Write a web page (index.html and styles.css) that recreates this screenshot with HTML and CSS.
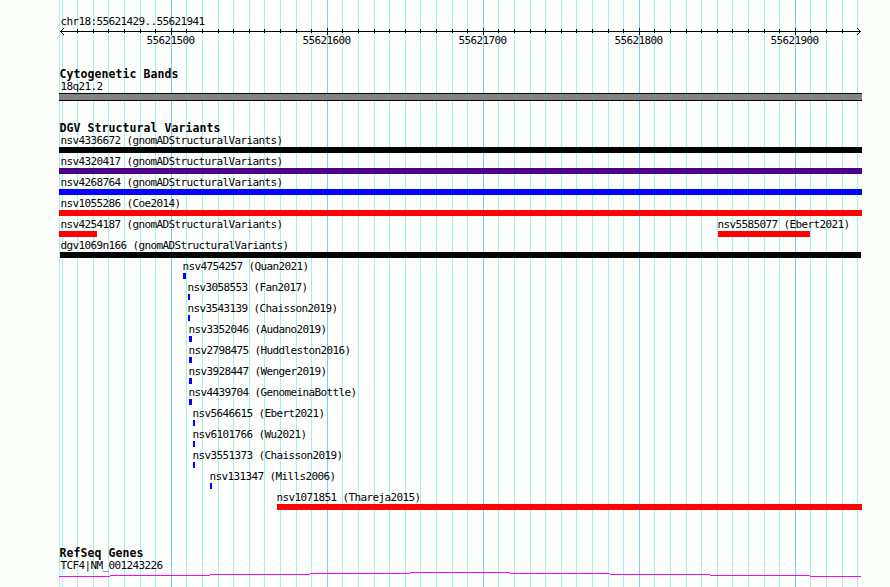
FILE: index.html
```html
<!DOCTYPE html>
<html lang="en">
<head>
<meta charset="utf-8">
<title>chr18:55621429..55621941</title>
<link rel="stylesheet" href="styles.css">
</head>
<body>
<main class="browser">
<svg class="grid" width="890" height="587" shape-rendering="crispEdges" aria-hidden="true"><path id="minor" class="minor"/><path id="major" class="major"/></svg>
<section class="region">
<div class="label">chr18:55621429..55621941</div>
<svg class="axis" width="804" height="7" shape-rendering="crispEdges"><path d="M1 3.5H802"/><path id="ticks"/><path d="M1 3h1v1h-1zM2 2h1v1h-1zM3 1h1v1h-1zM4 0h1v1h-1zM2 4h1v1h-1zM3 5h1v1h-1zM4 6h1v1h-1zM801 3h1v1h-1zM800 2h1v1h-1zM799 1h1v1h-1zM798 0h1v1h-1zM800 4h1v1h-1zM799 5h1v1h-1zM798 6h1v1h-1z" class="head"/></svg>
<div class="coordinates label"><span>55621500</span><span>55621600</span><span>55621700</span><span>55621800</span><span>55621900</span></div>
</section>
<section class="cytobands"><h2>Cytogenetic Bands</h2><div class="label">18q21.2</div><div class="band"></div></section>
<section class="variants"><h2>DGV Structural Variants</h2><div id="rows"></div></section>
<section class="genes"><h2>RefSeq Genes</h2><div class="label">TCF4|NM_001243226</div>
<svg class="gene" width="803" height="6" shape-rendering="crispEdges"><path d="M0 5.5H51M51 4.5H151M151 3.5H251M251 2.5H351M351 1.5H451M451 2.5H551M551 3.5H651M651 4.5H751M751 5.5H802"/></svg>
</section>
</main>
<script src="tracks.js"></script>
</body>
</html>
```
FILE: styles.css
```css
* { box-sizing: border-box; }
body { margin: 0; background: #fcfefc; color: #040204; overflow: hidden; }
.browser { position: relative; width: 890px; height: 587px; padding: 15px 0 0 59px; overflow: hidden; font-family: "DejaVu Sans Mono", monospace; }
.browser > section { position: relative; }
.grid { position: absolute; top: 0; left: 0; }
.grid path { fill: none; stroke-width: 1px; }
.grid .minor { stroke: #aceeec; }
.grid .major { stroke: #84caec; }
svg { display: block; }
.label { height: 13px; padding-left: 1px; font-size: 11px; line-height: 13px; letter-spacing: -0.622px; text-indent: 0.4px; white-space: pre; }
h2 { height: 13px; margin: 0; font-size: 11.5px; line-height: 13px; letter-spacing: 0.077px; text-indent: 0.4px; white-space: pre; }
.region { height: 53px; }
.axis path { stroke: #040204; fill: none; }
.axis .head { stroke: none; fill: #040204; }
.coordinates { display: flex; gap: 108px; padding-left: 87px; margin-top: -1px; }
.coordinates span { width: 48px; }
.cytobands { height: 54px; }
.cytobands .label { margin-top: -1px; }
.band { width: 803px; height: 8px; background: #848284; border: solid #040204; border-width: 1px 0; }
.variants { height: 425px; }
.variants h2 { height: 12px; }
.row { display: grid; grid-template-columns: 658px 145px; height: 21px; }
.feature { min-width: 0; }
.feature .label { padding: 0; }
.bar { height: 6px; }
.black { background: #040204; }
.purple { background: #4c0284; }
.blue { background: #0402fc; }
.red { background: #fc0204; }
.genes .label { margin-top: -1px; }
.gene { margin-top: -1px; }
.gene path { stroke: #fc02fc; fill: none; }
```
FILE: tracks.js
```js
const minor = [59];
const major = [];
let ticks = "";
for (let k = -7; k <= 44; k++) {
  const x = Math.floor((1712 + 156 * k) / 10);
  const isMajor = k % 10 === 0;
  (isMajor ? major : minor).push(x);
  if (k > -7 && k < 44) ticks += isMajor ? `M${x - 58.5} 0V7` : `M${x - 58.5} 1V5`;
}
const lines = xs => xs.map(x => `M${x + 0.5} 0V587`).join("");
document.getElementById("minor").setAttribute("d", lines(minor));
document.getElementById("major").setAttribute("d", lines(major));
document.getElementById("ticks").setAttribute("d", ticks);

// name, text offset, bar offset, bar width, colour
const rows = [
  [["nsv4336672 (gnomADStructuralVariants)", 1, 0, 803, "black"]],
  [["nsv4320417 (gnomADStructuralVariants)", 1, 0, 803, "purple"]],
  [["nsv4268764 (gnomADStructuralVariants)", 1, 0, 803, "blue"]],
  [["nsv1055286 (Coe2014)", 1, 0, 803, "red"]],
  [["nsv4254187 (gnomADStructuralVariants)", 1, 0, 38, "red"], ["nsv5585077 (Ebert2021)", 0, 1, 92, "red"]],
  [["dgv1069n166 (gnomADStructuralVariants)", 1, 1, 801, "black"]],
  [["nsv4754257 (Quan2021)", 123, 124, 3, "blue"]],
  [["nsv3058553 (Fan2017)", 128, 129, 2, "blue"]],
  [["nsv3543139 (Chaisson2019)", 128, 129, 2, "blue"]],
  [["nsv3352046 (Audano2019)", 129, 130, 3, "blue"]],
  [["nsv2798475 (Huddleston2016)", 129, 130, 3, "blue"]],
  [["nsv3928447 (Wenger2019)", 129, 130, 3, "blue"]],
  [["nsv4439704 (GenomeinaBottle)", 129, 130, 3, "blue"]],
  [["nsv5646615 (Ebert2021)", 133, 134, 2, "blue"]],
  [["nsv6101766 (Wu2021)", 133, 134, 2, "blue"]],
  [["nsv3551373 (Chaisson2019)", 133, 134, 2, "blue"]],
  [["nsv131347 (Mills2006)", 150, 151, 2, "blue"]],
  [["nsv1071851 (Thareja2015)", 217, 218, 585, "red"]]
];
document.getElementById("rows").innerHTML = rows.map(row => `<div class="row">${row.map(([name, tx, bx, w, color]) =>
  `<div class="feature"><div class="label" style="margin-left:${tx}px">${name}</div><div class="bar ${color}" style="margin-left:${bx}px;width:${w}px"></div></div>`).join("")}</div>`).join("");
```
